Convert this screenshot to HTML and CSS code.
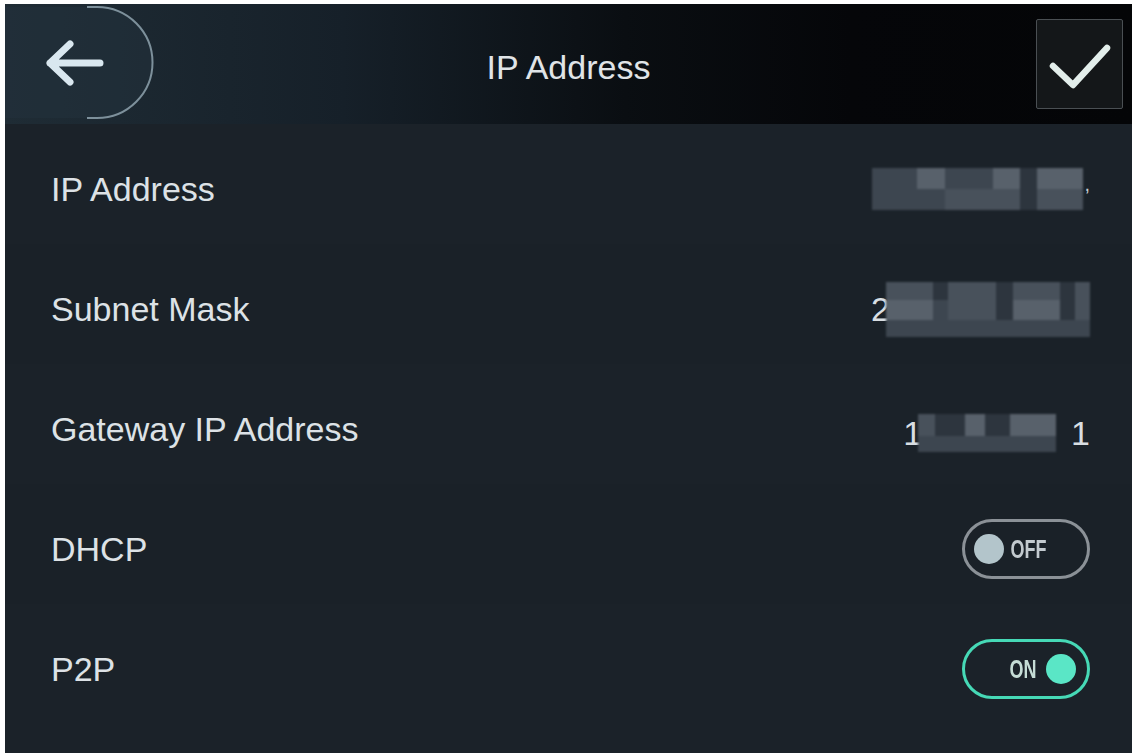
FILE: index.html
```html
<!DOCTYPE html>
<html lang="en">
<head>
  <meta charset="UTF-8">
  <meta name="viewport" content="width=device-width, initial-scale=1.0">
  <title>IP Address</title>
  <link rel="stylesheet" href="styles.css">
</head>
<body>
  <div class="screen">
    <header class="topbar">
      <div class="back">
        <svg width="154" height="120" viewBox="0 0 154 120">
          <path d="M0 3 H92 A55.5 55.5 0 0 1 92 114 H0 Z" fill="#22323d" fill-opacity="0.55"/>
          <path d="M82 3 H92 A55.5 55.5 0 0 1 92 114 H82" fill="none" stroke="#7d909b" stroke-width="2"/>
          <path d="M95 59 H45 M65 40 L45 59 L65 78" fill="none" stroke="#d9e7ef" stroke-width="7" stroke-linecap="round" stroke-linejoin="round"/>
        </svg>
      </div>
      <h1 class="title">IP Address</h1>
      <div class="confirm-wrap">
        <button class="confirm">
          <svg width="84" height="88" viewBox="0 0 84 88">
            <path d="M15 46 L35 65 L69 28" fill="none" stroke="#e3eeeb" stroke-width="6.5" stroke-linecap="round" stroke-linejoin="round"/>
          </svg>
        </button>
      </div>
    </header>

    <div class="list">
      <div class="row">
        <span class="label">IP Address</span>
        <div class="value">
          <div class="mosaic mosaic-ip">
            <i class="s2"></i><i class="s4"></i><i class="s2"></i><i class="s4"></i><i class="s1"></i><i class="s4"></i>
            <i class="s2"></i><i class="s2"></i><i class="s3"></i><i class="s3"></i><i class="s1"></i><i class="s3"></i>
          </div>
          <span class="tick">,</span>
        </div>
      </div>

      <div class="row">
        <span class="label">Subnet Mask</span>
        <div class="value">
          <span class="digit digit-cut">2</span>
          <div class="mosaic mosaic-mask">
            <i class="s3"></i><i class="s1"></i><i class="s3"></i><i class="s1"></i><i class="s3"></i><i class="s1"></i><i class="s3"></i>
            <i class="s4"></i><i class="s2"></i><i class="s3"></i><i class="s1"></i><i class="s4"></i><i class="s1"></i><i class="s3"></i>
            <i class="s2"></i><i class="s2"></i><i class="s2"></i><i class="s2"></i><i class="s2"></i><i class="s2"></i><i class="s2"></i>
          </div>
        </div>
      </div>

      <div class="row">
        <span class="label">Gateway IP Address</span>
        <div class="value value-low">
          <span class="digit digit-cut">1</span>
          <div class="mosaic mosaic-gw">
            <i class="s3"></i><i class="s1"></i><i class="s4"></i><i class="s1"></i><i class="s4"></i>
            <i class="s2"></i><i class="s2"></i><i class="s2"></i><i class="s2"></i><i class="s2"></i>
          </div>
          <span class="digit digit-end">1</span>
        </div>
      </div>

      <div class="row">
        <span class="label">DHCP</span>
        <div class="toggle off">
          <span class="knob"></span>
          <span class="toggle-text">OFF</span>
        </div>
      </div>

      <div class="row">
        <span class="label">P2P</span>
        <div class="toggle on">
          <span class="toggle-text">ON</span>
          <span class="knob"></span>
        </div>
      </div>
    </div>
  </div>
</body>
</html>
```

FILE: styles.css
```css
html, body {
  margin: 0;
  height: 100%;
}
body {
  background: #ffffff;
  padding: 4px 5px 3px 5px;
  box-sizing: border-box;
  font-family: 'Liberation Sans', Arial, sans-serif;
}
.screen {
  height: 100%;
  display: flex;
  flex-direction: column;
  background: #1b2229;
  color: #dde2e6;
}
.topbar {
  height: 120px;
  flex: none;
  display: grid;
  grid-template-columns: 1fr auto 1fr;
  align-items: center;
  background: linear-gradient(90deg, #1f2c35 0%, #162029 30%, #0a0e12 55%, #050609 75%, #040507 100%);
}
.back {
  height: 120px;
}
.back svg {
  display: block;
}
.title {
  margin: 0;
  padding-top: 6px;
  font-size: 34px;
  font-weight: normal;
  color: #e0e4e7;
}
.confirm-wrap {
  display: flex;
  justify-content: flex-end;
  padding-right: 9px;
}
.confirm {
  width: 87px;
  height: 90px;
  padding: 0;
  background: #141719;
  border: 1px solid #4a4f53;
  border-radius: 2px;
  display: flex;
  align-items: center;
  justify-content: center;
}
.confirm svg {
  display: block;
}
.list {
  flex: 1;
  display: flex;
  flex-direction: column;
}
.row {
  height: 120px;
  box-sizing: border-box;
  padding: 10px 42px 0 46px;
  display: flex;
  align-items: center;
  justify-content: space-between;
}
.row:nth-child(odd) {
  background: #1b2229;
}
.row:nth-child(even) {
  background: #1a2128;
}
.label {
  font-size: 34px;
  color: #dde2e6;
}
.value {
  display: flex;
  align-items: center;
  font-size: 34px;
  color: #d9dee2;
}
.value-low {
  margin-top: 8px;
}
.digit-cut {
  margin-right: -4px;
  position: relative;
  z-index: 0;
}
.digit-end {
  margin-left: 15px;
}
.tick {
  font-size: 20px;
  color: #c9ced3;
  margin-left: 1px;
  margin-top: -10px;
}
.mosaic {
  display: grid;
  filter: blur(1px);
  position: relative;
  z-index: 1;
}
.mosaic i {
  display: block;
}
.mosaic-ip {
  grid-template-columns: 45px 28px 48px 27px 17px 46px;
  grid-template-rows: 21px 21px;
}
.mosaic-mask {
  grid-template-columns: 47px 15px 48px 17px 47px 15px 15px;
  grid-template-rows: 18px 20px 17px;
}
.mosaic-gw {
  grid-template-columns: 17px 30px 20px 25px 46px;
  grid-template-rows: 22px 16px;
}
.s1 { background: #2d353e; }
.s2 { background: #3d4650; }
.s3 { background: #48515b; }
.s4 { background: #58616b; }

.toggle {
  width: 128px;
  height: 60px;
  box-sizing: border-box;
  border-radius: 30px;
  border: 3px solid #8b9197;
  display: flex;
  align-items: center;
}
.knob {
  width: 30px;
  height: 30px;
  border-radius: 50%;
  flex: none;
}
.toggle-text {
  display: inline-block;
  font-size: 25px;
  font-weight: bold;
  width: 40px;
  text-align: center;
  white-space: nowrap;
  transform: scaleX(0.72);
}
.toggle.off {
  padding-left: 9px;
}
.toggle.off .knob {
  background: #b3c5cb;
}
.toggle.off .toggle-text {
  color: #c3cacf;
  margin-left: 1px;
}
.toggle.on {
  border-color: #46d9b6;
  justify-content: flex-end;
  padding-right: 11px;
}
.toggle.on .knob {
  background: #5ae6c6;
}
.toggle.on .toggle-text {
  color: #c6ddd6;
  margin-right: 3px;
}
```
